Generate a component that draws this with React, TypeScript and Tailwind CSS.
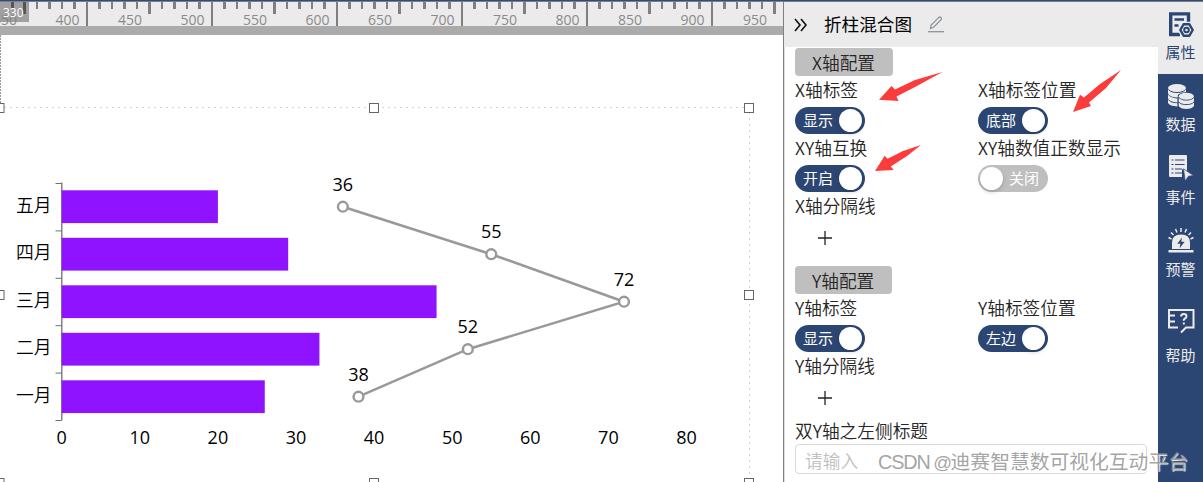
import { ReactNode } from "react";
import clsx from "clsx";

const months = [
    { name: "五月", bar: 20, line: 36 },
    { name: "四月", bar: 29, line: 55 },
    { name: "三月", bar: 48, line: 72 },
    { name: "二月", bar: 33, line: 52 },
    { name: "一月", bar: 26, line: 38 },
];

const RULER_START = 12;
const toX = (value: number) => 61.7 + value * 7.81;
const toY = (index: number) => 206.7 + index * 47.5;

function Ruler() {
    const ticks = Array.from({ length: 62 }, (_, i) => i);
    const labels = Array.from({ length: 13 }, (_, i) => 350 + i * 50);

    return (
        <svg width="783" height="33" className="block shrink-0 bg-[#ebebeb] font-['Open_Sans','Noto_Sans',sans-serif]">
            <rect y="24" width="783" height="9" fill="#ababab" />
            {ticks.map((i) => {
                const height = i % 10 === 6 ? 24 : i % 5 === 1 ? 12 : 7;
                return <rect key={i} x={Math.round(RULER_START + i * 12.5 - 1.2)} y="0" width={height === 24 ? 2 : i % 2 ? 3 : 2} height={height} fill="#808080" />;
            })}
            {labels.map((label, i) => (
                <text key={label} x={16.9 + i * 62.5} y="23" fontSize="14" textAnchor="end" fill="#8a8a8a">{label}</text>
            ))}
            <rect width="29" height="20" fill="#808080" fillOpacity="0.7" />
            <rect x="11" width="3" height="7" fill="#555" />
            <rect x="23" width="3" height="12" fill="#555" />
            <text x="3" y="15" fontSize="12" fill="#fff">330</text>
        </svg>
    );
}

function Handle(props: { x: number, y: number }) {
    return <rect x={props.x - 4.5} y={props.y - 4.5} width="9" height="9" fill="#fff" stroke="#666" />;
}

function MixedChart() {
    return (
        <svg width="783" height="447" viewBox="0 35 783 447" className="block font-['Open_Sans','Noto_Sans_CJK_SC',sans-serif]">
            <path d="M0.5 35V103" stroke="#999" strokeDasharray="2 1" />
            <path d="M4 107.5H745" stroke="#d0d0d0" strokeDasharray="2 4" />
            <path d="M749.5 112V482" stroke="#d0d0d0" strokeDasharray="2 4" />
            <Handle x={-0.5} y={108} />
            <Handle x={374} y={108} />
            <Handle x={749} y={108} />
            <Handle x={-0.5} y={295} />
            <Handle x={749} y={295} />
            <Handle x={-0.5} y={483} />
            <Handle x={374} y={483} />
            <Handle x={749} y={483} />

            <path d="M61.8 182.5V420.5" stroke="#6e7079" strokeWidth="1.3" />
            {[0, 1, 2, 3, 4, 5].map((i) => (
                <path key={i} d={`M55.5 ${183.5 + i * 47.4}h6`} stroke="#6e7079" />
            ))}
            {months.map((month, i) => (
                <g key={month.name}>
                    <rect x="61.7" y={toY(i) - 16.4} width={month.bar * 7.81} height="32.8" fill="#8f13fe" />
                    <text x="16" y={toY(i) + 5} fontSize="17.8" className="font-['Noto_Sans_CJK_SC',sans-serif] font-[350]">{month.name}</text>
                </g>
            ))}
            <polyline points={months.map((m, i) => `${toX(m.line)},${toY(i)}`).join(" ")} fill="none" stroke="#999" strokeWidth="2.5" />
            {months.map((month, i) => (
                <g key={month.name}>
                    <circle cx={toX(month.line)} cy={toY(i)} r="4.9" fill="#fff" stroke="#999" strokeWidth="2.4" />
                    <text x={toX(month.line)} y={toY(i) - 16} fontSize="18" textAnchor="middle">{month.line}</text>
                </g>
            ))}
            {[0, 10, 20, 30, 40, 50, 60, 70, 80].map((value) => (
                <text key={value} x={toX(value)} y="444" fontSize="18" textAnchor="middle">{value}</text>
            ))}
        </svg>
    );
}

function Toggle(props: { on?: boolean, text: string }) {
    return (
        <div
            className={clsx(
                "flex h-[27px] w-[70px] items-center justify-between rounded-full text-[15px] font-normal leading-none text-white",
                props.on ? "bg-[#2c4674] pl-2 pr-[3px]" : "flex-row-reverse bg-[#bfbfbf] pr-[9px] pl-[2px]",
            )}
        >
            <span className="pb-[2px]">{props.text}</span>
            <span className="size-[23px] rounded-full bg-white shadow-[0_2px_4px_rgba(0,35,11,0.2)]" />
        </div>
    );
}

function Label(props: { children: ReactNode }) {
    return <div className="h-[31px] leading-[27px]">{props.children}</div>;
}

function Field(props: { label: string, children: ReactNode }) {
    return (
        <div>
            <Label>{props.label}</Label>
            {props.children}
        </div>
    );
}

function SectionTitle(props: { text: string, wide?: boolean }) {
    return (
        <div className={clsx("h-7 rounded bg-[#bfbfbf] pl-[17px] leading-[29px]", props.wide ? "w-[98px]" : "w-[97px]")}>
            {props.text}
        </div>
    );
}

function AddLine() {
    return (
        <div className="flex h-[29px] items-center pl-[23px]">
            <svg width="14" height="14" stroke="#222" strokeWidth="1.3">
                <path d="M0 7H14M7 0V14" />
            </svg>
        </div>
    );
}

function ConfigPanel() {
    return (
        <div className="flex w-[375px] shrink-0 flex-col border-l border-[#808080]">
            <div className="flex h-[45px] shrink-0 items-center bg-[#ebebeb] pl-[10px] text-[17.6px] text-black">
                <svg width="13" height="14" fill="none" stroke="#111" strokeWidth="1.6">
                    <path d="M1 1L6 7L1 13M7 1L12 7L7 13" />
                </svg>
                <span className="ml-[17px]">折柱混合图</span>
                <svg width="16" height="17" fill="none" stroke="#8d939c" strokeWidth="1.3" className="ml-4">
                    <path d="M2.5 12.5L3.2 9L10.8 1.4Q11.8 0.6 12.8 1.5T13.1 3.6L5.6 11.3Z" />
                    <path d="M0 15.7H16" />
                </svg>
            </div>
            <div className="grow border-l border-[#ddd] px-[10px] pt-px text-[17.7px] font-[350] text-[#262626]">
                <SectionTitle text="X轴配置" wide />
                <div className="grid grid-cols-[183px_1fr]">
                    <Field label="X轴标签"><Toggle on text="显示" /></Field>
                    <Field label="X轴标签位置"><Toggle on text="底部" /></Field>
                    <Field label="XY轴互换"><Toggle on text="开启" /></Field>
                    <Field label="XY轴数值正数显示"><Toggle text="关闭" /></Field>
                </div>
                <Field label="X轴分隔线"><AddLine /></Field>
                <div className="mt-[14px]">
                    <SectionTitle text="Y轴配置" />
                </div>
                <div className="grid grid-cols-[183px_1fr]">
                    <Field label="Y轴标签"><Toggle on text="显示" /></Field>
                    <Field label="Y轴标签位置"><Toggle on text="左边" /></Field>
                </div>
                <Field label="Y轴分隔线"><AddLine /></Field>
                <div className="mt-[5px] h-[27px] leading-[27px]">双Y轴之左侧标题</div>
                <div className="h-[30px] w-[352px] rounded-sm border border-[#d9d9d9] pl-[9px] leading-[30px] text-[#bfbfbf]">请输入</div>
            </div>
        </div>
    );
}

const tabs = [
    {
        name: "属性",
        icon: (
            <svg width="26" height="26" viewBox="0 0 26 26" fill="none" stroke="currentColor" strokeWidth="3.4">
                <path d="M12 22.5H2.7V1.9H20.5V11" />
                <path d="M6.5 7.5H16M6.5 13.5H10.5" strokeWidth="2.6" />
                <path d="M15.6 12.3H21.4L24.7 18L21.4 23.7H15.6L12.3 18Z" stroke="#ebebeb" strokeWidth="5" />
                <path d="M15.6 12.3H21.4L24.7 18L21.4 23.7H15.6L12.3 18Z" strokeWidth="2.4" strokeLinejoin="round" />
                <circle cx="18.5" cy="18" r="2.3" strokeWidth="2" />
            </svg>
        ),
    },
    {
        name: "数据",
        icon: (
            <svg width="26" height="26" viewBox="0 0 26 26" fill="currentColor">
                <ellipse cx="9" cy="4" rx="9" ry="4" />
                <path d="M0 5.5Q3 9 9 9T18 5.5V8Q12 8.6 9.8 11V13.6Q2 13.4 0 9.6ZM0 10.6Q3 14.5 9.4 14.4V18.4Q1.5 18 0 14.6ZM0 15.6Q2 19.2 9.4 19.3V22.5Q1.5 22 0 19Z" />
                <ellipse cx="18.3" cy="12.3" rx="7.6" ry="3.5" />
                <path d="M10.7 13.8Q13 16.6 18.3 16.6T26 13.8V17.4Q23.5 20 18.3 20T10.7 17.4ZM10.7 18.5Q13 21 18.3 21T26 18.5V22Q24 25 18.3 25T10.7 22Z" />
            </svg>
        ),
    },
    {
        name: "事件",
        icon: (
            <svg width="26" height="26" viewBox="0 0 26 26" fill="currentColor">
                <path d="M2 0H18Q19 0 19 1V17L14 14V22H2Q1 22 1 21V1Q1 0 2 0Z" />
                <path d="M3.5 5H5.5M7 5H16.5M3.5 9.5H5.5M7 9.5H16.5M3.5 14H5.5M7 14H14M3.5 18H5.5M7 18H14" stroke="#2c4674" strokeWidth="1.2" />
                <path d="M15.5 13.8L25.5 20.5L20.5 21.2L17.2 26Z" stroke="#2c4674" strokeWidth="0.7" />
            </svg>
        ),
    },
    {
        name: "预警",
        icon: (
            <svg width="26" height="26" viewBox="0 0 26 26" fill="currentColor">
                <path d="M4 21V14.5Q4 6.5 13 6.5T22 14.5V21Z" />
                <path d="M0.5 22H25.5V24.5H0.5Z" />
                <path d="M13 0V4M7.5 1L9 4.5M18.5 1L17 4.5M3 4.5L5.5 7M23 4.5L20.5 7M0.5 9.5L3.5 11M25.5 9.5L22.5 11" stroke="currentColor" strokeWidth="1.5" />
                <path d="M14 9.5L9.3 15.8H12.4L11.6 20.3L16.6 13.8H13.3Z" fill="#2c4674" />
            </svg>
        ),
    },
    {
        name: "帮助",
        icon: (
            <svg width="28" height="26" viewBox="0 0 28 26" fill="none" stroke="currentColor" strokeWidth="2">
                <path d="M11 19.5H2V2H26.5V19.5H19L14 24.5M2 7.5H8M2 13.5H8" />
                <path d="M14 8.5Q14.2 6 16.8 6T19.5 8.3Q19.5 9.7 18 10.5T16.8 12.7M16.8 14.5V16.5" />
            </svg>
        ),
    },
];

function SideTabs() {
    return (
        <div className="flex w-[45px] shrink-0 flex-col bg-[#2c4674]">
            {tabs.map((tab, i) => (
                <div
                    key={tab.name}
                    className={clsx(
                        "flex shrink-0 flex-col items-center text-[15px] leading-[20px]",
                        i === 0 ? "h-[72px] bg-[#ebebeb] pt-[10px] text-[#2c4674]" : "text-[#ebebeb]",
                        i === 1 && "h-[73px] pt-[10px]",
                        i === 2 && "h-[73px] pt-2",
                        i === 3 && "h-[72px] pt-2",
                        i === 4 && "pt-4",
                    )}
                >
                    <span>{tab.icon}</span>
                    <span className={clsx(i < 2 && "mt-[4px]", i === 2 && "mt-[6px]", i === 3 && "mt-[5px]", i === 4 && "mt-[11px]")}>{tab.name}</span>
                </div>
            ))}
        </div>
    );
}

// red callout arrows pointing at the switches
function Arrows() {
    return (
        <svg width="1203" height="482" className="pointer-events-none absolute left-0 top-0" fill="#fc3b3b">
            <path d="M942.5 72L915 87L896.5 96.5L898.5 101L879 99.7L891.5 86L895 89.5L915 80Z" />
            <path d="M1121 70L1106 88L1089 102.5L1091 106L1073 112L1080 94.7L1084 97.5L1100 84Z" />
            <path d="M921 145L907 156L890.7 166.5L893.8 170L875 171L884.7 155.7L887.5 158.8L903 151Z" />
        </svg>
    );
}

export default function App() {
    return (
        <div className="relative h-[482px] w-[1203px] overflow-hidden bg-white font-['Noto_Sans_CJK_SC',sans-serif]">
            <div className="h-[2px] border-b border-[#808080] bg-[#2c4a84]" />
            <div className="flex h-[480px]">
                <div className="flex w-[783px] shrink-0 flex-col">
                    <Ruler />
                    <MixedChart />
                </div>
                <ConfigPanel />
                <SideTabs />
            </div>
            <Arrows />
            <div className="absolute left-[878px] top-[447px] whitespace-nowrap font-['Liberation_Sans','Noto_Sans_CJK_SC',sans-serif] text-[19.8px] leading-[30px] text-[#999]/90 [text-shadow:1px_1px_1px_#fff]">
                <span className="tracking-[-1.1px]">CSDN</span>
                <span className="text-[18.5px] tracking-[-1.5px]"> @</span>
                <span>迪赛智慧数可视化互动平台</span>
            </div>
        </div>
    );
}
